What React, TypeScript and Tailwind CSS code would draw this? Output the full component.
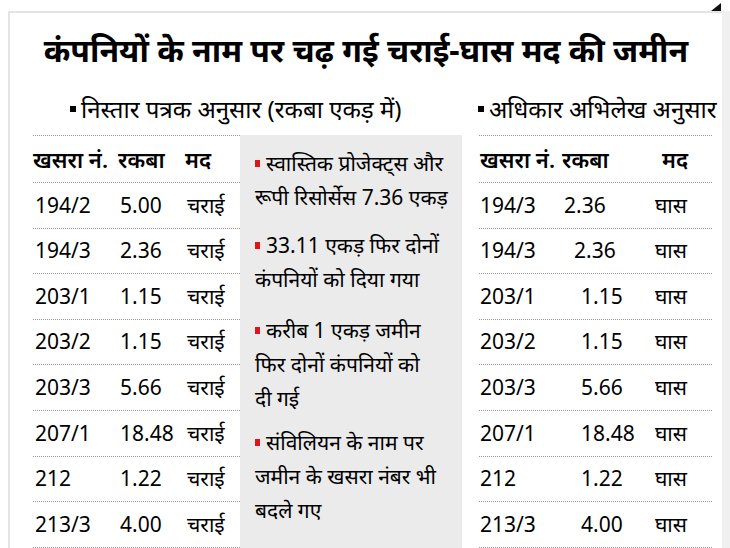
import React from "react";

const DEV = "font-['Noto_Sans','Noto_Sans_Devanagari','Lohit_Devanagari',sans-serif]";

const leftRows = [
  ["194/2", "5.00", "चराई"],
  ["194/3", "2.36", "चराई"],
  ["203/1", "1.15", "चराई"],
  ["203/2", "1.15", "चराई"],
  ["203/3", "5.66", "चराई"],
  ["207/1", "18.48", "चराई"],
  ["212", "1.22", "चराई"],
  ["213/3", "4.00", "चराई"],
];

const rightRows: [string, string, string, string][] = [
  ["194/3", "2.36", "घास", "pl-[84px]"],
  ["194/3", "2.36", "घास", "pl-[94px]"],
  ["203/1", "1.15", "घास", "pl-[101px]"],
  ["203/2", "1.15", "घास", "pl-[101px]"],
  ["203/3", "5.66", "घास", "pl-[101px]"],
  ["207/1", "18.48", "घास", "pl-[101px]"],
  ["212", "1.22", "घास", "pl-[101px]"],
  ["213/3", "4.00", "घास", "pl-[101px]"],
];

const notes: [string[], string][] = [
  [["स्वास्तिक प्रोजेक्ट्स और", "रूपी रिसोर्सेस 7.36 एकड़"], ""],
  [["33.11 एकड़ फिर दोनों", "कंपनियों को दिया गया"], "mt-[14px]"],
  [["करीब 1 एकड़ जमीन", "फिर दोनों कंपनियों को", "दी गई"], "mt-[17px]"],
  [["संविलियन के नाम पर", "जमीन के खसरा नंबर भी", "बदले गए"], "mt-[10px]"],
];

export default function App() {
  return (
    <div className={`relative w-[730px] h-[548px] bg-white overflow-hidden text-black ${DEV}`}>
      <svg className="absolute left-[711px] top-[3px]" width="10" height="8" viewBox="0 0 10 8">
        <polygon points="10,0 10,8 0,8" fill="#111" />
      </svg>
      <div className="ml-[8px] mt-[11px] w-[722px] h-[537px] flex">
        <div className="w-[714px] h-full border-t-2 border-l-2 border-[#e4e4e4] flex flex-col">
          <h1 className="text-center text-[32px] font-bold leading-[40px] pt-[17px] h-[70px] whitespace-nowrap">
            कंपनियों के नाम पर चढ़ गई चराई-घास मद की जमीन
          </h1>
          <div className="flex h-[52px] items-center text-[24px] leading-[30px] whitespace-nowrap">
            <div className="pl-[60px] w-[468px] flex items-center">
              <span className="w-[6px] h-[6px] bg-black mr-[5px] inline-block" />
              निस्तार पत्रक अनुसार (रकबा एकड़ में)
            </div>
            <div className="flex items-center">
              <span className="w-[6px] h-[6px] bg-black mr-[5px] inline-block" />
              अधिकार अभिलेख अनुसार
            </div>
          </div>
          <div className="flex flex-1">
            {/* left table */}
            <div className="ml-[23px] w-[207px] border-t border-dotted border-[#9a9a9a] text-[21px] whitespace-nowrap">
              <div className="h-[47px] flex items-center border-b border-dotted border-[#9a9a9a] font-semibold text-[22px]">
                <span className="w-[85px]">खसरा नं.</span>
                <span className="w-[67px]">रकबा</span>
                <span>मद</span>
              </div>
              {leftRows.map((r, i) => (
                <div key={i} className="h-[45.6px] flex items-center border-b border-dotted border-[#9a9a9a]">
                  <span className="w-[87px] pl-[2px]">{r[0]}</span>
                  <span className="w-[67px]">{r[1]}</span>
                  <span>{r[2]}</span>
                </div>
              ))}
            </div>
            {/* middle panel */}
            <div className="w-[222px] bg-[#ebebeb] pl-[15px] pt-[11px] text-[21px] leading-[34px] flex flex-col">
              {notes.map(([lines, mt], i) => (
                <div key={i} className={mt}>
                  {lines.map((line, j) => (
                    <div key={j} className="flex items-center whitespace-nowrap">
                      {j === 0 && <span className="w-[5px] h-[7px] bg-[#e0151b] mr-[6px] inline-block" />}
                      {line}
                    </div>
                  ))}
                </div>
              ))}
            </div>
            {/* right table */}
            <div className="ml-[17px] w-[233px] border-t border-dotted border-[#9a9a9a] text-[21px] whitespace-nowrap">
              <div className="h-[47px] flex items-center border-b border-dotted border-[#9a9a9a] font-semibold text-[22px]">
                <span className="w-[83px] pl-[1px]">खसरा नं.</span>
                <span className="w-[100px]">रकबा</span>
                <span>मद</span>
              </div>
              {rightRows.map((r, i) => (
                <div key={i} className="h-[45.6px] flex items-center border-b border-dotted border-[#9a9a9a]">
                  <span className="w-[176px] flex">
                    <span className="w-0 whitespace-nowrap pl-[1px]">{r[0]}</span>
                    <span className={r[3]}>{r[1]}</span>
                  </span>
                  <span className="ml-auto mr-[25px]">{r[2]}</span>
                </div>
              ))}
            </div>
          </div>
        </div>
        <div className="w-[8px] h-full bg-[#f0f0f0]" />
      </div>
    </div>
  );
}
